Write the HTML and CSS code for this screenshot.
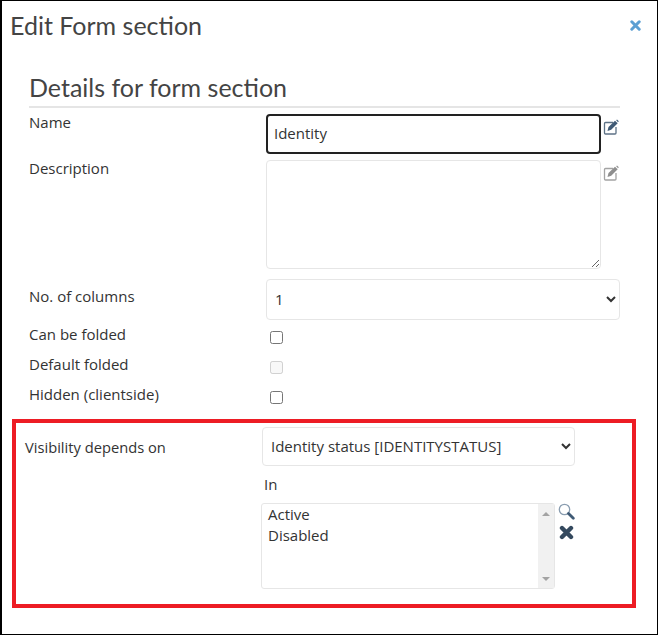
FILE: index.html
```html
<!DOCTYPE html>
<html lang="en">
<head>
    <meta charset="UTF-8">
    <meta name="viewport" content="width=device-width, initial-scale=1.0">
    <title>Edit Form section</title>
    <link rel="stylesheet" href="styles.css">
</head>
<body>
    <div class="dialog">
        <div class="dialog-header">
            <h1>Edit Form section</h1>
            <svg class="close-icon" width="11" height="11" viewBox="0 0 11 11"><path d="M1.8 1.8 L9.2 9.2 M9.2 1.8 L1.8 9.2" stroke="#5b9fd3" stroke-width="3" stroke-linecap="round"/></svg>
        </div>

        <div class="section">
            <h2>Details for form section</h2>

            <div class="row row-name">
                <label>Name</label>
                <input type="text" class="field field-focus" value="Identity">
                <svg class="edit-icon" width="16" height="16" viewBox="0 0 16 16"><path d="M10 3.5H2.5a1 1 0 0 0-1 1V14a1 1 0 0 0 1 1H12a1 1 0 0 0 1-1V8" fill="none" stroke="#5d7286" stroke-width="1.3"/><path d="M4.5 12 L5.5 8 L12 1.8 L14.7 4.3 L8.2 10.8 Z" fill="#3f5a75"/><path d="M13.2 1.3 L14 .4 L15.8 2.2 L15 3.2 Z" fill="#3f5a75"/></svg>
            </div>

            <div class="row row-desc">
                <label>Description</label>
                <textarea class="field field-area"></textarea>
                <svg class="edit-icon" width="16" height="16" viewBox="0 0 16 16"><path d="M10 3.5H2.5a1 1 0 0 0-1 1V14a1 1 0 0 0 1 1H12a1 1 0 0 0 1-1V8" fill="none" stroke="#a3a3a3" stroke-width="1.3"/><path d="M4.5 12 L5.5 8 L12 1.8 L14.7 4.3 L8.2 10.8 Z" fill="#8e8e8e"/><path d="M13.2 1.3 L14 .4 L15.8 2.2 L15 3.2 Z" fill="#8e8e8e"/></svg>
            </div>

            <div class="row row-cols">
                <label>No. of columns</label>
                <select class="field field-select"><option>1</option></select>
            </div>

            <div class="row row-check">
                <label>Can be folded</label>
                <input type="checkbox" class="check">
            </div>
            <div class="row row-check">
                <label>Default folded</label>
                <input type="checkbox" class="check" disabled>
            </div>
            <div class="row row-check">
                <label>Hidden (clientside)</label>
                <input type="checkbox" class="check">
            </div>
        </div>

        <div class="visibility">
            <label class="visibility-label">Visibility depends on</label>
            <div class="visibility-fields">
                <select class="field field-select status-select"><option>Identity status [IDENTITYSTATUS]</option></select>
                <div class="in-label">In</div>
                <div class="list-row">
                    <div class="listbox">
                        <div class="list-items">
                            <div>Active</div>
                            <div>Disabled</div>
                        </div>
                        <div class="scrollbar">
                            <span class="arrow-up"></span>
                            <span class="arrow-down"></span>
                        </div>
                    </div>
                    <div class="list-actions">
                        <svg width="17" height="17" viewBox="0 0 17 17"><circle cx="6.5" cy="6.5" r="5.2" fill="none" stroke="#8a9db0" stroke-width="1.3"/><path d="M10.5 10.5 L15.3 15.3" stroke="#3f5a75" stroke-width="2.8" stroke-linecap="round"/></svg>
                        <svg width="15" height="15" viewBox="0 0 15 15"><path d="M3 3 L12 12 M12 3 L3 12" stroke="#34495e" stroke-width="4.4" stroke-linecap="round"/></svg>
                    </div>
                </div>
            </div>
        </div>
    </div>
</body>
</html>
```

FILE: styles.css
```css
* {
    box-sizing: border-box;
}

body {
    margin: 0;
    font-family: "Open Sans", sans-serif;
    font-size: 15px;
    line-height: 20px;
    color: #333;
    background-color: #fff;
}

.dialog {
    width: 658px;
    height: 635px;
    border: 1px solid #000;
    border-left-width: 2px;
    padding: 0 16px 0 9px;
}

.dialog-header {
    display: flex;
    justify-content: space-between;
    align-items: center;
    height: 48px;
}

h1 {
    margin: 0 0 0 -1px;
    font-family: Lato, sans-serif;
    font-size: 25px;
    font-weight: 400;
    color: #444;
}

.section {
    width: 591px;
    margin-left: 18px;
}

h2 {
    margin: 0;
    height: 59px;
    padding-top: 21px;
    border-bottom: 2px solid #e5e5e5;
    font-family: Lato, sans-serif;
    font-size: 25px;
    line-height: 35px;
    font-weight: 400;
    color: #444;
}

.row {
    display: flex;
    align-items: flex-start;
}

.row label {
    width: 237px;
    flex-shrink: 0;
}

.row-name {
    margin-top: 6px;
    height: 46px;
}

.row-name label {
    margin-top: -2px;
}

.row-desc {
    height: 119px;
}

.row-desc label {
    margin-top: -2px;
}

.edit-icon {
    margin: 5px 0 0 2px;
}

.row-cols {
    height: 42px;
}

.field {
    border: 1px solid #e6e6e6;
    border-radius: 4px;
    background-color: #fff;
    font-family: "Open Sans", sans-serif;
    font-size: 15px;
    color: #333;
}

.field-focus {
    width: 335px;
    height: 40px;
    padding: 0 0 2px 6px;
    border: 2px solid #222;
}

.field-area {
    width: 335px;
    height: 109px;
    padding: 6px;
}

.field-select {
    width: 354px;
    height: 41px;
    padding: 0 4px 2px;
}

.row-cols label {
    padding-top: 7px;
}

.row-check {
    height: 30px;
    align-items: center;
}

.row-check label {
    padding-bottom: 4px;
}

.check {
    width: 13px;
    height: 13px;
    margin: 2px 0 0 4px;
}

.visibility {
    display: flex;
    width: 624px;
    height: 189px;
    margin: 8px 0 0 1px;
    padding: 4px 0 0 9px;
    border: 4px solid #ed1c24;
}

.visibility-label {
    width: 237px;
    flex-shrink: 0;
    padding-top: 10px;
    font-size: 14.7px;
}

.status-select {
    display: block;
    width: 313px;
    height: 39px;
}

.in-label {
    margin: 8px 0 0 2px;
}

.list-row {
    display: flex;
    margin: 9px 0 0 -1px;
}

.listbox {
    display: flex;
    width: 294px;
    height: 86px;
    border: 1px solid #e6e6e6;
    border-radius: 3px;
}

.list-items {
    flex: 1;
    padding: 0 6px;
    line-height: 21px;
}

.scrollbar {
    display: flex;
    flex-direction: column;
    justify-content: space-between;
    align-items: center;
    width: 16px;
    padding: 8px 0 7px;
    background-color: #f1f1f1;
}

.arrow-up {
    border: 4px solid transparent;
    border-top: 0;
    border-bottom: 4px solid #a3a3a3;
}

.arrow-down {
    border: 4px solid transparent;
    border-bottom: 0;
    border-top: 4px solid #a3a3a3;
}

.list-actions {
    display: flex;
    flex-direction: column;
    align-items: center;
    gap: 5px;
    margin-left: 3px;
}
```
